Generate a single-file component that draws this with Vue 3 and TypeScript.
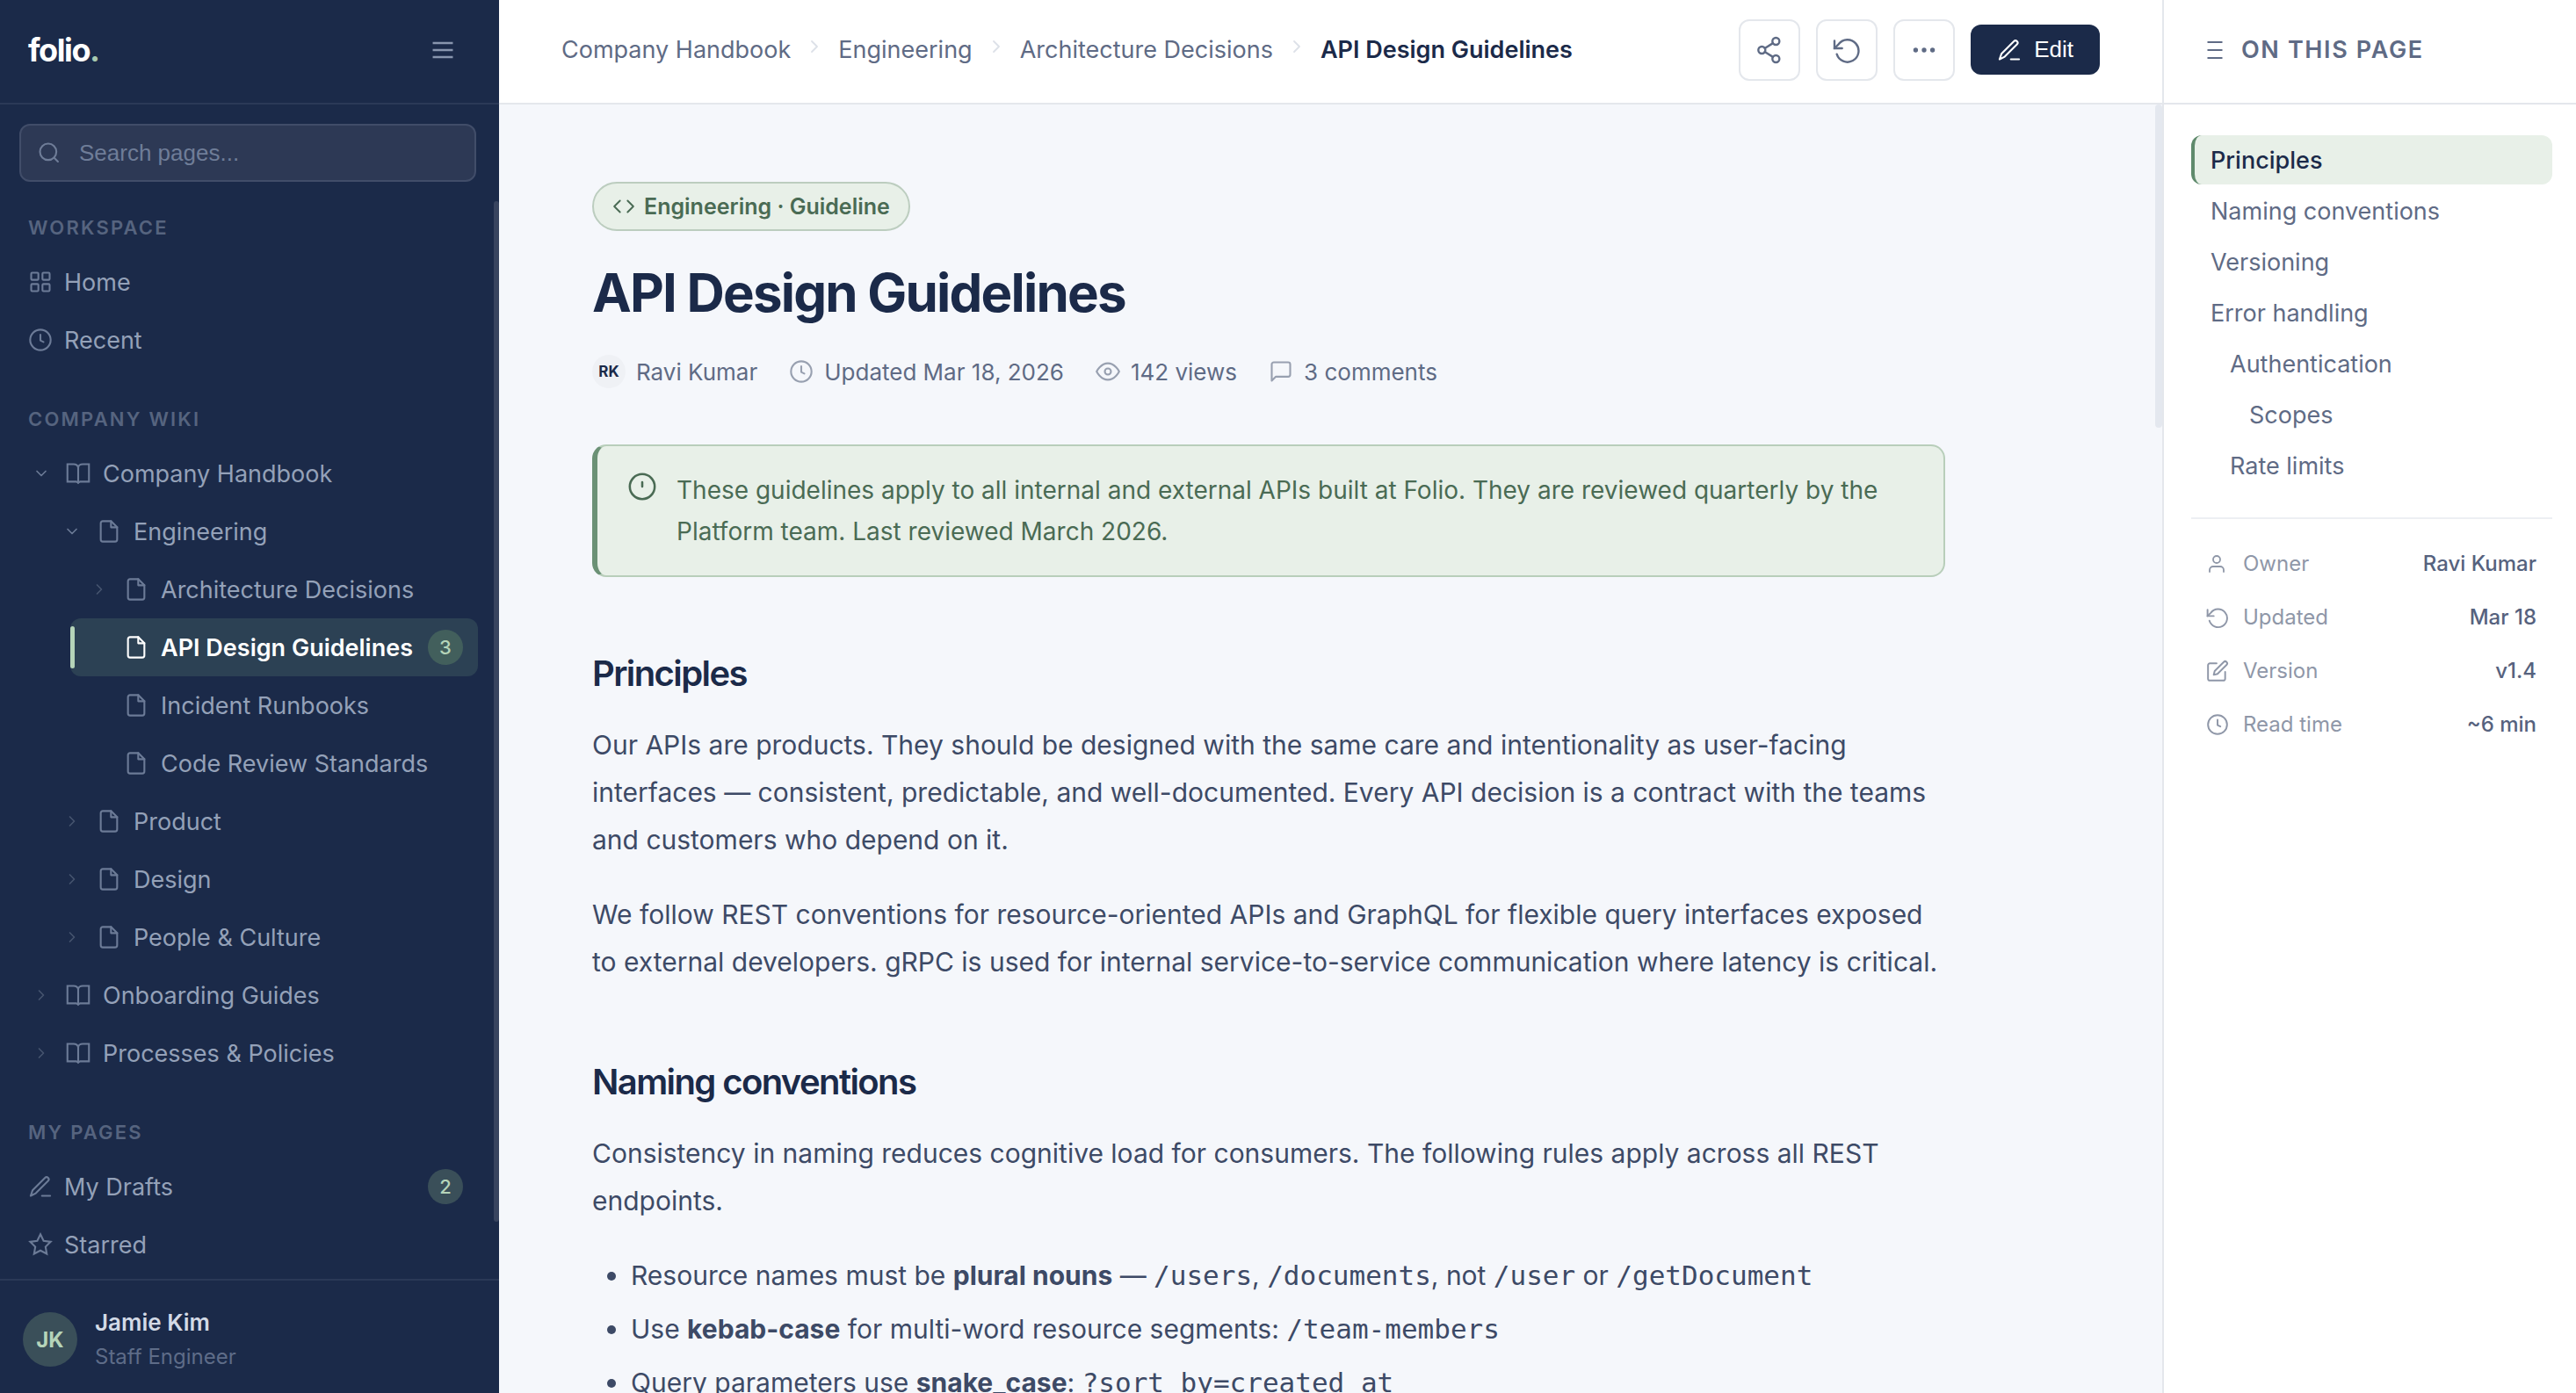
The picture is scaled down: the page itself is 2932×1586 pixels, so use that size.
<script setup lang="ts">
import { ref } from 'vue'

type IconName =
  | 'menu' | 'search' | 'grid' | 'clock' | 'down' | 'right' | 'book' | 'file' | 'pen' | 'star'
  | 'share' | 'history' | 'more' | 'code' | 'eye' | 'comment' | 'info' | 'user' | 'edit' | 'list'

const icons: Record<IconName, string> = {
  menu: '<path stroke-linecap="butt" d="M3.4 6h17.2M3.4 12h17.2M3.4 18h17.2"/>',
  list: '<path stroke-linecap="butt" d="M3.500 3h17M3.500 12h17M3.500 21h17"/>',
  search: '<circle cx="11" cy="11" r="8"/><path d="m20.5 20.5-3.8-3.8"/>',
  grid: '<rect x="3" y="3" width="7" height="7" rx="1"/><rect x="14" y="3" width="7" height="7" rx="1"/><rect x="3" y="14" width="7" height="7" rx="1"/><rect x="14" y="14" width="7" height="7" rx="1"/>',
  clock: '<circle cx="12" cy="12" r="10"/><path d="M12 7v5.5l3 1.5"/>',
  down: '<path d="m6 9 6 6 6-6"/>',
  right: '<path d="m9 18 6-6-6-6"/>',
  book: '<path stroke-linejoin="miter" d="M12 6.5C12 4.500 10 3 7.500 3H1.500v17H10l2 1 2-1h8.500V3h-6C14 3 12 4.500 12 6.500zM12 6.500V21.500"/>',
  file: '<path d="M14 2H6a2 2 0 0 0-2 2v16a2 2 0 0 0 2 2h12a2 2 0 0 0 2-2V8z"/><path d="M14 2v6h6"/>',
  pen: '<path d="M13.5 21h8"/><path d="M16.5 3.5a2.12 2.12 0 0 1 3 3L7.5 18.5 2.5 21l1.8-5.3z"/>',
  star: '<path stroke-linejoin="miter" d="m12 2 3.1 6.3 6.9 1-5 4.9 1.2 6.8-6.2-3.2L5.8 21 7 14.200 2 9.300l6.900-1z"/>',
  share: '<circle cx="17.500" cy="4.500" r="3"/><circle cx="5.500" cy="12" r="3"/><circle cx="17.500" cy="19.500" r="3"/><path d="m8 13.500 7 4.400M15 6.100l-7 4.400"/>',
  history: '<path stroke-linejoin="miter" d="M1.500 4v6.500h6.500"/><path d="M3.500 15.500a9.500 9.500 0 1 0 1.500-8.500L1.500 10.500"/>',
  more: '<g fill="currentColor"><circle cx="4.800" cy="12" r="1.100"/><circle cx="12" cy="12" r="1.100"/><circle cx="19.200" cy="12" r="1.100"/></g>',
  code: '<path d="m16 18 6-6-6-6M8 6l-6 6 6 6"/>',
  eye: '<path d="M1 12s4-8 11-8 11 8 11 8-4 8-11 8S1 12 1 12z"/><circle cx="12" cy="12" r="3"/>',
  comment: '<path d="M21 15a2 2 0 0 1-2 2H7l-4 4V5a2 2 0 0 1 2-2h14a2 2 0 0 1 2 2z"/>',
  info: '<circle cx="12" cy="12" r="10"/><path d="M12 8.500v3.500"/>',
  user: '<path d="M20 21v-2a4 4 0 0 0-4-4H8a4 4 0 0 0-4 4v2"/><circle cx="12" cy="7" r="4"/>',
  edit: '<path d="M11 4H4a2 2 0 0 0-2 2v14a2 2 0 0 0 2 2h14a2 2 0 0 0 2-2v-7"/><path d="M18.500 2.500a2.120 2.120 0 0 1 3 3L12 15l-4 1 1-4z"/>',
}

interface TreeItem {
  label: string
  icon: IconName
  level: 0 | 1 | 2
  chevron?: 'down' | 'right'
  active?: boolean
  badge?: number
}

const workspace: { label: string; icon: IconName }[] = [
  { label: 'Home', icon: 'grid' },
  { label: 'Recent', icon: 'clock' },
]

const wiki: TreeItem[] = [
  { label: 'Company Handbook', icon: 'book', level: 0, chevron: 'down' },
  { label: 'Engineering', icon: 'file', level: 1, chevron: 'down' },
  { label: 'Architecture Decisions', icon: 'file', level: 2, chevron: 'right' },
  { label: 'API Design Guidelines', icon: 'file', level: 2, active: true, badge: 3 },
  { label: 'Incident Runbooks', icon: 'file', level: 2 },
  { label: 'Code Review Standards', icon: 'file', level: 2 },
  { label: 'Product', icon: 'file', level: 1, chevron: 'right' },
  { label: 'Design', icon: 'file', level: 1, chevron: 'right' },
  { label: 'People & Culture', icon: 'file', level: 1, chevron: 'right' },
  { label: 'Onboarding Guides', icon: 'book', level: 0, chevron: 'right' },
  { label: 'Processes & Policies', icon: 'book', level: 0, chevron: 'right' },
]

const myPages: { label: string; icon: IconName; badge?: number }[] = [
  { label: 'My Drafts', icon: 'pen', badge: 2 },
  { label: 'Starred', icon: 'star' },
]

const crumbs = ['Company Handbook', 'Engineering', 'Architecture Decisions']

const toc = [
  { label: 'Principles', depth: 0 },
  { label: 'Naming conventions', depth: 0 },
  { label: 'Versioning', depth: 0 },
  { label: 'Error handling', depth: 0 },
  { label: 'Authentication', depth: 1 },
  { label: 'Scopes', depth: 2 },
  { label: 'Rate limits', depth: 1 },
]

const details: { label: string; value: string; icon: IconName }[] = [
  { label: 'Owner', value: 'Ravi Kumar', icon: 'user' },
  { label: 'Updated', value: 'Mar 18', icon: 'history' },
  { label: 'Version', value: 'v1.4', icon: 'edit' },
  { label: 'Read time', value: '~6 min', icon: 'clock' },
]

const query = ref('')
const activeSection = ref('Principles')
</script>

<template>
  <div class="app">
    <aside class="sidebar">
      <div class="sidebar-head">
        <a href="#" class="logo">folio<span>.</span></a>
        <button type="button" class="menu-btn" aria-label="Toggle sidebar">
          <svg class="icon" viewBox="0 0 24 24" v-html="icons.menu" />
        </button>
      </div>

      <label class="search">
        <svg class="icon" viewBox="0 0 24 24" v-html="icons.search" />
        <input v-model="query" type="search" placeholder="Search pages..." aria-label="Search pages" />
      </label>

      <nav class="nav" aria-label="Pages">
        <h2 class="nav-label">Workspace</h2>
        <a v-for="item in workspace" :key="item.label" href="#" class="row">
          <svg class="icon" viewBox="0 0 24 24" v-html="icons[item.icon]" />
          <span class="row-text">{{ item.label }}</span>
        </a>

        <h2 class="nav-label">Company Wiki</h2>
        <a
          v-for="item in wiki"
          :key="item.label"
          href="#"
          class="row tree-row"
          :class="['level-' + item.level, { active: item.active }]"
        >
          <span class="chevron" :class="item.chevron">
            <svg v-if="item.chevron" class="icon" viewBox="0 0 24 24" v-html="icons[item.chevron]" />
          </span>
          <svg class="icon" viewBox="0 0 24 24" v-html="icons[item.icon]" />
          <span class="row-text">{{ item.label }}</span>
          <span v-if="item.badge" class="badge">{{ item.badge }}</span>
        </a>

        <h2 class="nav-label">My Pages</h2>
        <a v-for="item in myPages" :key="item.label" href="#" class="row">
          <svg class="icon" viewBox="0 0 24 24" v-html="icons[item.icon]" />
          <span class="row-text">{{ item.label }}</span>
          <span v-if="item.badge" class="badge">{{ item.badge }}</span>
        </a>
        <span class="nav-thumb" />
      </nav>

      <div class="profile">
        <span class="avatar">JK</span>
        <div>
          <div class="profile-name">Jamie Kim</div>
          <div class="profile-role">Staff Engineer</div>
        </div>
      </div>
    </aside>

    <main class="main">
      <header class="topbar">
        <nav class="crumbs" aria-label="Breadcrumb">
          <template v-for="crumb in crumbs" :key="crumb">
            <a href="#">{{ crumb }}</a>
            <svg class="icon crumb-sep" viewBox="0 0 24 24" v-html="icons.right" />
          </template>
          <span class="current" aria-current="page">API Design Guidelines</span>
        </nav>
        <div class="actions">
          <button type="button" class="icon-btn" aria-label="Share">
            <svg class="icon" viewBox="0 0 24 24" v-html="icons.share" />
          </button>
          <button type="button" class="icon-btn" aria-label="History">
            <svg class="icon" viewBox="0 0 24 24" v-html="icons.history" />
          </button>
          <button type="button" class="icon-btn" aria-label="More">
            <svg class="icon" viewBox="0 0 24 24" v-html="icons.more" />
          </button>
          <button type="button" class="edit-btn">
            <svg class="icon" viewBox="0 0 24 24" v-html="icons.pen" />
            Edit
          </button>
        </div>
      </header>

      <div class="scroller">
        <article class="article">
          <span class="chip">
            <svg class="icon" viewBox="0 0 24 24" v-html="icons.code" />
            Engineering · Guideline
          </span>
          <h1>API Design Guidelines</h1>
          <div class="meta">
            <span class="meta-item author"><span class="mini-avatar">RK</span>Ravi Kumar</span>
            <span class="meta-item">
              <svg class="icon" viewBox="0 0 24 24" v-html="icons.clock" />Updated Mar 18, 2026
            </span>
            <span class="meta-item">
              <svg class="icon" viewBox="0 0 24 24" v-html="icons.eye" />142 views
            </span>
            <span class="meta-item">
              <svg class="icon" viewBox="0 0 24 24" v-html="icons.comment" />3 comments
            </span>
          </div>

          <div class="callout">
            <svg class="icon" viewBox="0 0 24 24" v-html="icons.info" />
            <div>
              These guidelines apply to all internal and external APIs built at Folio. They are reviewed
              quarterly by the Platform team. Last reviewed March 2026.
            </div>
          </div>

          <h2>Principles</h2>
          <p>
            Our APIs are products. They should be designed with the same care and intentionality as
            user-facing interfaces — consistent, predictable, and well-documented. Every API decision is a
            contract with the teams and customers who depend on it.
          </p>
          <p>
            We follow REST conventions for resource-oriented APIs and GraphQL for flexible query interfaces
            exposed to external developers. gRPC is used for internal service-to-service communication where
            latency is critical.
          </p>

          <h2>Naming conventions</h2>
          <p>
            Consistency in naming reduces cognitive load for consumers. The following rules apply across all
            REST endpoints.
          </p>
          <ul>
            <li>
              Resource names must be <strong>plural nouns</strong> — <code>/users</code>,
              <code>/documents</code>, not <code>/user</code> or <code>/getDocument</code>
            </li>
            <li>
              Use <strong>kebab-case</strong> for multi-word resource segments: <code>/team-members</code>
            </li>
            <li>
              Query parameters use <strong>snake_case</strong>: <code>?sort_by=created_at</code>
            </li>
          </ul>
        </article>
        <span class="main-thumb" />
      </div>
    </main>

    <aside class="panel">
      <div class="panel-head">
        <svg class="icon" viewBox="0 0 24 24" v-html="icons.list" />
        <span>On this page</span>
      </div>
      <div class="panel-body">
        <nav class="toc" aria-label="On this page">
          <a
            v-for="item in toc"
            :key="item.label"
            href="#"
            :class="['depth-' + item.depth, { active: item.label === activeSection }]"
            @click.prevent="activeSection = item.label"
          >{{ item.label }}</a>
        </nav>
        <dl class="details">
          <div v-for="item in details" :key="item.label">
            <dt>
              <svg class="icon" :class="item.icon" viewBox="0 0 24 24" v-html="icons[item.icon]" />
              {{ item.label }}
            </dt>
            <dd>{{ item.value }}</dd>
          </div>
        </dl>
      </div>
    </aside>
  </div>
</template>

<style>
body {
  background: #f5f7fb;
}
</style>

<style scoped>
* {
  box-sizing: border-box;
}

.app {
  display: flex;
  height: 100vh;
  overflow: hidden;
  font-family: Inter, 'Liberation Sans', sans-serif;
  font-size: 27px;
  color: #3d4a66;
}

a {
  color: inherit;
  text-decoration: none;
}

button,
input {
  font-family: 'Liberation Sans', Arial, sans-serif;
  font-size: 26px;
}

.icon {
  flex: none;
  display: block;
  width: 28px;
  height: 28px;
  fill: none;
  stroke: currentColor;
  stroke-width: 1.8;
  stroke-linecap: round;
  stroke-linejoin: round;
}

/* Sidebar */
.sidebar {
  flex: none;
  display: flex;
  flex-direction: column;
  width: 568px;
  background: #1b2a49;
  color: #94a1b8;
}

.sidebar-head {
  flex: none;
  display: flex;
  align-items: center;
  justify-content: space-between;
  height: 119px;
  padding: 0 40px 4px 32px;
  border-bottom: 2px solid #2b3957;
}

.logo {
  font-size: 36px;
  font-weight: 700;
  letter-spacing: -0.04em;
  color: #fff;
}

.logo span {
  color: #a9c9b0;
}

.menu-btn {
  display: grid;
  place-items: center;
  width: 48px;
  height: 48px;
  padding: 0;
  border: 0;
  background: none;
  color: #8895ae;
}

.menu-btn .icon {
  width: 32px;
  height: 32px;
  stroke-width: 2;
}

.search {
  flex: none;
  display: flex;
  align-items: center;
  gap: 20px;
  height: 66px;
  margin: 22px 26px 22px 22px;
  padding: 0 18px;
  border: 2px solid #414d69;
  border-radius: 12px;
  background: #2d3955;
  color: #6f7d98;
}

.search input {
  flex: 1;
  min-width: 0;
  padding: 0;
  border: 0;
  outline: 0;
  background: none;
  color: #fff;
}

.search input::placeholder {
  color: #6f7d98;
  opacity: 1;
}

.nav {
  position: relative;
  flex: 1;
  min-height: 0;
  padding: 15px 24px 0 14px;
  overflow: hidden;
}

.nav-label {
  margin: 42px 0 14px;
  padding-left: 18px;
  font-size: 22px;
  font-weight: 600;
  line-height: 30px;
  letter-spacing: 0.1em;
  text-transform: uppercase;
  color: #56647f;
}

.nav-label:first-child {
  margin-top: 0;
}

.row {
  position: relative;
  display: flex;
  align-items: center;
  gap: 13px;
  height: 66px;
  padding: 0 17px 0 18px;
  border-radius: 12px;
}

.tree-row {
  gap: 14px;
}

.row > .icon {
  color: #6c7b97;
}

.row-text {
  flex: 1;
  min-width: 0;
  white-space: nowrap;
}

.level-1 {
  margin-left: 35px;
}

.level-2 {
  margin-left: 66px;
}

.chevron {
  flex: none;
  display: grid;
  place-items: center;
  width: 29px;
  color: #6c7b97;
}

.chevron.right {
  color: #46546f;
}

.chevron .icon {
  width: 20px;
  height: 20px;
  stroke-width: 2;
}

.row.active {
  background: #2c4154;
  color: #fff;
  font-weight: 600;
}

.row.active > .icon {
  color: #fff;
}

.row.active::before {
  content: '';
  position: absolute;
  left: 0;
  top: 9px;
  bottom: 9px;
  width: 5px;
  border-radius: 3px;
  background: #b5d4b9;
}

.badge {
  flex: none;
  min-width: 40px;
  height: 40px;
  border-radius: 20px;
  background: #3a4f59;
  color: #b5d4b9;
  font-size: 22px;
  font-weight: 500;
  line-height: 40px;
  text-align: center;
}

.active .badge {
  background: #425f5c;
}

.nav-thumb {
  position: absolute;
  top: 0;
  right: 0;
  width: 6px;
  height: 1162px;
  border-radius: 3px;
  background: #38445f;
}

.profile {
  flex: none;
  display: flex;
  align-items: center;
  gap: 20px;
  padding: 28px 26px 22px;
  border-top: 2px solid #2b3957;
}

.avatar {
  display: grid;
  place-items: center;
  width: 62px;
  height: 62px;
  border-radius: 50%;
  background: #3a4f59;
  color: #b5d4b9;
  font-size: 24px;
  font-weight: 700;
}

.profile-name {
  font-size: 26px;
  font-weight: 600;
  line-height: 39px;
  color: #d3dae6;
}

.profile-role {
  font-size: 24px;
  line-height: 39px;
  color: #5e6c88;
}

/* Main column */
.main {
  flex: 1;
  min-width: 0;
  display: flex;
  flex-direction: column;
  background: #f5f7fb;
}

.topbar {
  flex: none;
  display: flex;
  align-items: center;
  justify-content: space-between;
  height: 119px;
  padding: 0 71px 4px;
  border-bottom: 2px solid #e4e7ec;
  background: #fff;
}

.crumbs {
  display: flex;
  align-items: center;
  gap: 15px;
  color: #5f6b85;
  white-space: nowrap;
}

.crumb-sep {
  width: 24px;
  height: 32px;
  padding-bottom: 8px;
  color: #dde1e8;
}

.crumbs .current {
  color: #1b2a49;
  font-weight: 600;
}

.actions {
  display: flex;
  align-items: center;
  gap: 18px;
}

.icon-btn {
  display: grid;
  place-items: center;
  width: 70px;
  height: 70px;
  padding: 0;
  border: 2px solid #e4e7ec;
  border-radius: 12px;
  background: #fff;
  color: #5f6b85;
}

.icon-btn .icon {
  width: 32px;
  height: 32px;
}

.edit-btn {
  display: flex;
  align-items: center;
  gap: 14px;
  height: 57px;
  padding: 0 30px;
  border: 0;
  border-radius: 12px;
  background: #1b2a49;
  color: #fff;
}

.scroller {
  position: relative;
  flex: 1;
  min-height: 0;
  overflow: hidden;
}

.article {
  max-width: 1752px;
  padding: 88px 106px;
}

.chip {
  display: inline-flex;
  align-items: center;
  gap: 10px;
  height: 56px;
  padding: 0 21px;
  border: 2px solid #bccdbf;
  border-radius: 28px;
  background: #e8f0e8;
  color: #4a6b54;
  font-size: 25px;
  font-weight: 600;
  vertical-align: top;
}

.chip .icon {
  width: 26px;
  height: 26px;
}

h1 {
  margin: 34px 0 35px;
  font-size: 60px;
  font-weight: 700;
  line-height: 72px;
  letter-spacing: -0.03em;
  color: #1b2a49;
}

.meta {
  display: flex;
  align-items: center;
  gap: 36px;
  height: 38px;
  font-size: 26px;
  color: #5f6b85;
}

.meta-item {
  display: flex;
  align-items: center;
  gap: 12px;
}

.meta .icon {
  color: #98a0b0;
}

.mini-avatar {
  display: grid;
  place-items: center;
  width: 38px;
  height: 38px;
  border-radius: 50%;
  background: #eff1f5;
  color: #1b2a49;
  font-size: 17px;
  font-weight: 700;
}

.callout {
  display: flex;
  align-items: flex-start;
  gap: 22px;
  margin-top: 64px;
  padding: 27px 34px 26px;
  border: 2px solid #b8ceba;
  border-left: 6px solid #6b9175;
  border-radius: 16px;
  background: #e8f0e8;
  color: #4a6b54;
  font-size: 28px;
  line-height: 47px;
}

.callout .icon {
  width: 34px;
  height: 34px;
  margin-top: 2px;
}

.article h2 {
  margin: 84px 0 28px;
  font-size: 40px;
  font-weight: 600;
  line-height: 52px;
  letter-spacing: -0.04em;
  color: #1b2a49;
}

p {
  margin: 0 0 31px;
  font-size: 30px;
  line-height: 54px;
}

ul {
  margin: 0;
  padding: 0;
  list-style: none;
  font-size: 30px;
  line-height: 54px;
}

li {
  position: relative;
  margin-bottom: 7px;
  padding-left: 44px;
}

li::before {
  content: '';
  position: absolute;
  left: 17px;
  top: 23px;
  width: 10px;
  height: 10px;
  border-radius: 50%;
  background: currentColor;
}

strong {
  font-weight: 700;
}

code {
  font-family: 'DejaVu Sans Mono', monospace;
  font-size: 31px;
  line-height: 1;
}

.main-thumb {
  position: absolute;
  top: 0;
  right: 0;
  width: 8px;
  height: 368px;
  border-radius: 4px;
  background: #e4e8ef;
}

/* Right panel */
.panel {
  flex: none;
  width: 471px;
  border-left: 2px solid #e4e7ec;
  background: #fff;
}

.panel-head {
  display: flex;
  align-items: center;
  gap: 18px;
  height: 119px;
  padding: 0 46px 4px;
  border-bottom: 2px solid #e4e7ec;
  color: #5f6b85;
  font-weight: 600;
  letter-spacing: 0.06em;
  text-transform: uppercase;
  white-space: nowrap;
}

.panel-head .icon {
  width: 24px;
  height: 24px;
  stroke-width: 2;
}

.panel-body {
  padding: 35px 27px 35px 31px;
}

.toc {
  display: flex;
  flex-direction: column;
  gap: 2px;
  padding-bottom: 31px;
  border-bottom: 2px solid #edeff3;
}

.toc a {
  height: 56px;
  padding-left: 18px;
  border-left: 4px solid transparent;
  border-radius: 12px;
  line-height: 58px;
  color: #5f6b85;
}

.toc .depth-1 {
  padding-left: 40px;
}

.toc .depth-2 {
  padding-left: 62px;
}

.toc .active {
  border-left-color: #5f8a6c;
  background: #e8f0e8;
  color: #1b2a49;
  font-weight: 500;
}

.details {
  margin: 20px 0 0;
  padding: 0 18px 0 17px;
  font-size: 24px;
}

.details div {
  display: flex;
  align-items: center;
  justify-content: space-between;
  height: 61px;
}

.details dt {
  display: flex;
  align-items: center;
  gap: 16px;
  color: #8f97a8;
}

.details .icon {
  width: 26px;
  height: 26px;
}

.details .user {
  width: 24px;
  height: 24px;
  margin-right: 2px;
}

.details dd {
  margin: 0;
  font-weight: 500;
  color: #56627e;
}
</style>
